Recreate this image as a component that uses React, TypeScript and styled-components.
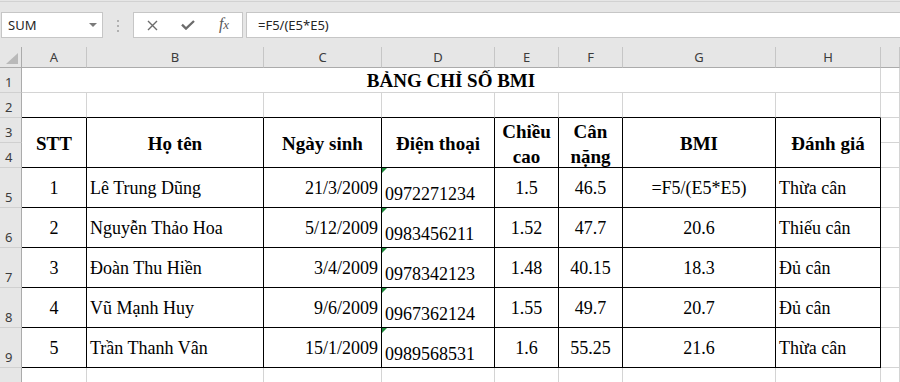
import React from 'react'
import styled, { createGlobalStyle, css } from 'styled-components'

const GlobalStyle = createGlobalStyle`
  html, body {
    margin: 0;
    padding: 0;
    background: #ffffff;
    overflow: hidden;
  }
`

const UI_FONT = `'Noto Sans', 'Open Sans', Arial, sans-serif`
const SHEET_FONT = `'Liberation Serif', 'Times New Roman', serif`
const GRID = '#d4d4d4'
const HEAD_BG = '#e6e6e6'

const Window = styled.div`
  width: 900px;
  height: 382px;
  overflow: hidden;
  display: flex;
  flex-direction: column;
  background: #ffffff;
`

const FormulaBar = styled.div`
  flex: none;
  height: 47px;
  box-sizing: border-box;
  padding: 12px 0 0 1px;
  display: flex;
  align-items: flex-start;
  background: ${HEAD_BG};
  box-shadow: inset 0 1px 0 ${HEAD_BG}, inset 0 2px 0 #d2d2d2;
  font-family: ${UI_FONT};
  font-size: 13px;
  color: #262626;
`

const Field = styled.div`
  height: 26px;
  box-sizing: border-box;
  border: 1px solid #c6c6c6;
  background: #ffffff;
  display: flex;
  align-items: center;
`

const NameBox = styled(Field)`
  width: 102px;
  padding: 0 5px 0 6px;
  justify-content: space-between;
`

const Caret = styled.span`
  width: 0;
  height: 0;
  border-left: 4px solid transparent;
  border-right: 4px solid transparent;
  border-top: 4px solid #7a7a7a;
`

const Grip = styled.div`
  margin: 8px 0 0 14px;
  display: flex;
  flex-direction: column;
  gap: 3px;

  span {
    width: 2px;
    height: 2px;
    background: #b0b0b0;
  }
`

const FxButtons = styled(Field)`
  width: 110px;
  margin-left: 14px;
`

const IconSlot = styled.span`
  width: 36px;
  height: 100%;
  display: flex;
  align-items: center;
  justify-content: center;
  color: #6b6b6b;
`

const FxGlyph = styled.span`
  font-family: ${SHEET_FONT};
  font-style: italic;
  font-size: 16px;
  color: #5a5a5a;
  margin-top: -2px;

  small {
    font-size: 13px;
  }
`

const FormulaInput = styled(Field)`
  flex: 1;
  margin: 0 -2px 0 3px;
  padding-left: 11px;
`

const Sheet = styled.div`
  flex: 1;
  display: grid;
  grid-template-columns: 22px 65px 177px 118px 113px 64px 64px 153px 105px 1fr;
  grid-template-rows: 21px 25px 25px 25px 25px repeat(5, 40px) 25px;
`

const Corner = styled.div`
  box-sizing: border-box;
  background: ${HEAD_BG};
  border-right: 1px solid #ababab;
  border-bottom: 1px solid #ababab;
  position: relative;

  &::after {
    content: '';
    position: absolute;
    right: 3px;
    bottom: 3px;
    width: 12px;
    height: 11px;
    background: #b9b9b9;
    clip-path: polygon(100% 0, 100% 100%, 0 100%);
  }
`

const ColHead = styled.div`
  box-sizing: border-box;
  background: ${HEAD_BG};
  border-right: 1px solid #c6c6c6;
  border-bottom: 1px solid #ababab;
  display: flex;
  align-items: center;
  justify-content: center;
  padding-top: 1px;
  font-family: ${UI_FONT};
  font-size: 13px;
  line-height: 13px;
  color: #3c3c3c;
`

const RowHead = styled.div`
  box-sizing: border-box;
  background: ${HEAD_BG};
  border-right: 1px solid #ababab;
  border-bottom: 1px solid #d0d0d0;
  display: flex;
  align-items: flex-end;
  padding: 0 0 3px 5px;
  font-family: ${UI_FONT};
  font-size: 13px;
  line-height: 13px;
  color: #3c3c3c;
`

type Rule = 'grid' | 'box' | 'under'
type HAlign = 'left' | 'center' | 'right'
type VAlign = 'center' | 'end'

const justify = { left: 'flex-start', center: 'center', right: 'flex-end' }

const Cell = styled.div<{
  $rule?: Rule
  $h?: HAlign
  $v?: VAlign
  $bold?: boolean
  $cols?: number
  $rows?: number
  $flag?: boolean
  $lines?: boolean
}>`
  position: relative;
  box-sizing: border-box;
  min-width: 0;
  overflow: visible;
  white-space: nowrap;
  border-right: 1px solid ${(p) => (p.$rule === 'box' ? '#000' : GRID)};
  border-bottom: 1px solid ${(p) => (p.$rule === 'box' || p.$rule === 'under' ? '#000' : GRID)};
  grid-column: span ${(p) => p.$cols ?? 1};
  grid-row: span ${(p) => p.$rows ?? 1};
  display: flex;
  flex-direction: column;
  align-items: ${(p) => justify[p.$h ?? 'left']};
  justify-content: ${(p) => (p.$v === 'end' ? 'flex-end' : 'center')};
  padding: ${(p) => (p.$v === 'end' ? '0 3px 2px' : '2px 3px 0')};
  font-family: ${SHEET_FONT};
  font-size: ${(p) => (p.$bold ? '19px' : '18px')};
  font-weight: ${(p) => (p.$bold ? 700 : 400)};
  line-height: ${(p) => (p.$lines ? '25px' : '1.15')};
  color: #000;

  ${(p) =>
    p.$flag &&
    css`
      &::before {
        content: '';
        position: absolute;
        top: 0;
        left: 0;
        border-top: 5px solid #1e8a3c;
        border-right: 5px solid transparent;
      }
    `}
`

const Title = styled(Cell)`
  padding-bottom: 0;
`

// column I is only a sliver at the right edge, its letter falls outside the window
const columns = ['A', 'B', 'C', 'D', 'E', 'F', 'G', 'H', '']

const headers: { label: string[]; lines?: boolean }[] = [
  { label: ['STT'] },
  { label: ['Họ tên'] },
  { label: ['Ngày sinh'] },
  { label: ['Điện thoại'] },
  { label: ['Chiều', 'cao'], lines: true },
  { label: ['Cân', 'nặng'], lines: true },
  { label: ['BMI'] },
  { label: ['Đánh giá'] },
]

const people = [
  ['1', 'Lê Trung Dũng', '21/3/2009', '0972271234', '1.5', '46.5', '=F5/(E5*E5)', 'Thừa cân'],
  ['2', 'Nguyễn Thảo Hoa', '5/12/2009', '0983456211', '1.52', '47.7', '20.6', 'Thiếu cân'],
  ['3', 'Đoàn Thu Hiền', '3/4/2009', '0978342123', '1.48', '40.15', '18.3', 'Đủ cân'],
  ['4', 'Vũ Mạnh Huy', '9/6/2009', '0967362124', '1.55', '49.7', '20.7', 'Đủ cân'],
  ['5', 'Trần Thanh Vân', '15/1/2009', '0989568531', '1.6', '55.25', '21.6', 'Thừa cân'],
]

const dataAlign: HAlign[] = ['center', 'left', 'right', 'left', 'center', 'center', 'center', 'left']

function CrossIcon() {
  return (
    <svg width="11" height="11" viewBox="0 0 11 11">
      <path d="M1 1 L10 10 M10 1 L1 10" stroke="currentColor" strokeWidth="1.4" fill="none" />
    </svg>
  )
}

function CheckIcon() {
  return (
    <svg width="14" height="10" viewBox="0 0 14 10">
      <path d="M1 4.6 L5 8.6 L13 1" stroke="currentColor" strokeWidth="2.3" fill="none" />
    </svg>
  )
}

export default function App() {
  return (
    <Window>
      <GlobalStyle />
      <FormulaBar>
        <NameBox>
          SUM
          <Caret />
        </NameBox>
        <Grip>
          <span />
          <span />
          <span />
        </Grip>
        <FxButtons>
          <IconSlot>
            <CrossIcon />
          </IconSlot>
          <IconSlot>
            <CheckIcon />
          </IconSlot>
          <IconSlot>
            <FxGlyph>
              f<small>x</small>
            </FxGlyph>
          </IconSlot>
        </FxButtons>
        <FormulaInput>=F5/(E5*E5)</FormulaInput>
      </FormulaBar>

      <Sheet>
        <Corner />
        {columns.map((c, i) => (
          <ColHead key={i}>{c}</ColHead>
        ))}

        <RowHead>1</RowHead>
        <Title $cols={8} $h="center" $v="end" $bold>
          BẢNG CHỈ SỐ BMI
        </Title>
        <Cell />

        <RowHead>2</RowHead>
        {columns.slice(0, 8).map((c) => (
          <Cell key={c} $rule="under" />
        ))}
        <Cell />

        <RowHead>3</RowHead>
        {headers.map((h) => (
          <Cell key={h.label[0]} $rule="box" $rows={2} $h="center" $bold $lines>
            {h.label.map((line) => (
              <span key={line}>{line}</span>
            ))}
          </Cell>
        ))}
        <Cell />
        <RowHead>4</RowHead>
        <Cell />

        {people.map((row, i) => (
          <React.Fragment key={row[0]}>
            <RowHead>{i + 5}</RowHead>
            {row.map((value, j) => (
              <Cell
                key={j}
                $rule="box"
                $h={dataAlign[j]}
                $v={j === 3 ? 'end' : 'center'}
                $flag={j === 3}
              >
                {value}
              </Cell>
            ))}
            <Cell />
          </React.Fragment>
        ))}

        {/* row 10: only its top edge is inside the window */}
        <RowHead />
        {columns.map((c, i) => (
          <Cell key={i} />
        ))}
      </Sheet>
    </Window>
  )
}
